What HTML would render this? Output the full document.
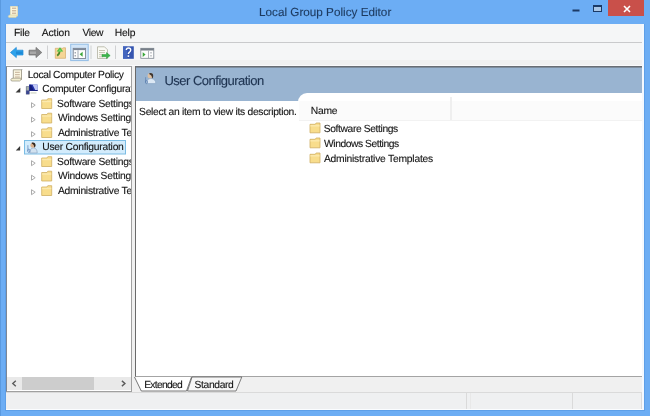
<!DOCTYPE html>
<html><head><meta charset="utf-8">
<style>
*{margin:0;padding:0;box-sizing:border-box}
html,body{width:650px;height:416px;overflow:hidden;background:#6cadf4}
#w{position:absolute;left:0;top:0;width:650px;height:416px;background:#6cadf4;font-family:"Liberation Sans",sans-serif;color:#151515;text-rendering:geometricPrecision;filter:blur(0.35px)}
.a{position:absolute}
.t{position:absolute;white-space:nowrap;font-size:10px;line-height:12px;-webkit-text-stroke:0.12px currentColor}
svg{position:absolute;overflow:visible}
.clip{position:absolute;overflow:hidden}


</style></head><body>
<div id="w">
<div class="a bgx" style="left:0;top:0;width:1px;height:416px;background:#5a9ae0"></div>
<div class="a bgx" style="left:6px;top:24px;width:638px;height:386px;background:#f0f0f0"></div>
<div class="a bgx" style="left:6px;top:24px;width:638px;height:18px;background:#f5f6f7"></div>
<div class="a bgx" style="left:6px;top:42px;width:638px;height:1px;background:#c9cacc"></div>
<div class="a bgx" style="left:6px;top:43px;width:638px;height:17px;background:#f5f6f7"></div>
<div class="a bgx" style="left:6px;top:65px;width:638px;height:1px;background:#f9f9fb"></div>

<!-- title icon -->
<svg style="left:6px;top:4px" width="16" height="16" viewBox="0 0 16 16">
<path d="M4.5 2.5 H11.5 V12 H4.5 Z" fill="#fbf6dc" stroke="#e8e0b8" stroke-width="0.8"/>
<path d="M2.2 12.2 Q3 10.8 4.5 11 H11.5 Q10.8 12.5 10 13.4 H2.8 Z" fill="#f2edc8" stroke="#d8d0a0" stroke-width="0.6"/>
<path d="M6 4.2 H10.2 M6 6.8 H10.2 M6 9.2 H10.2" stroke="#b89a80" stroke-width="0.9"/>
<path d="M11.8 2.5 L12.4 2" stroke="#5a6a80" stroke-width="0.6"/>
</svg>
<!-- window buttons -->
<div class="a bgx" style="left:608px;top:0;width:36px;height:16px;background:#c9504a"></div>
<svg style="left:560px;top:0" width="90" height="20">
<rect x="12.5" y="9.5" width="7" height="2" fill="#1b3a66"/>
<rect x="33.5" y="5.5" width="8" height="6" fill="#a9c6e6" stroke="#1b3a66" stroke-width="1"/>
<rect x="33" y="5" width="9" height="2" fill="#1b3a66"/>
<path d="M64 6 L70 12 M70 6 L64 12" stroke="#fff" stroke-width="1.6"/>
</svg>

<!-- toolbar -->
<svg style="left:6px;top:43px" width="160" height="21" viewBox="0 0 160 21">
 <path d="M4.5 9.5 L10.3 4.4 V7.2 H17 V12 H10.3 V14.6 Z" fill="#2ea3ec" stroke="#1a86d6" stroke-width="0.7"/>
 <path d="M10 8.5 H16.5 V11 H10 Z" fill="#1679c8" opacity="0.6"/>
 <path d="M35.8 9.5 L30 4.4 V7.2 H23 V12 H30 V14.6 Z" fill="#8a8a8a" stroke="#6e6e6e" stroke-width="0.7"/>
 <path d="M24 8.5 H30 V11 H24 Z" fill="#a8a8a8"/>
 <rect x="41" y="2.5" width="1" height="13.5" fill="#d0d1d3"/>
 <path d="M49.3 5.3 H56.5 L57.3 4.8 H59.5 V15.3 H49.3 Z" fill="#f5d596" stroke="#d2aa6a" stroke-width="0.7"/>
 <path d="M53.8 7.5 Q53.8 10.5 51.2 12.8" stroke="#4f8a2a" stroke-width="1.9" fill="none"/>
 <path d="M50.6 8.6 L54 4.2 L57.2 8.4 Z" fill="#4cc043"/>
 <path d="M52.2 8.4 L54 6 L55.8 8.4 Z" fill="#7ad86a"/>
 <rect x="64.7" y="1.2" width="17.5" height="16.4" fill="#d2e5f8" stroke="#93bde6" stroke-width="1"/>
 <rect x="67.2" y="5.3" width="12.4" height="10.2" fill="#fdfdfd" stroke="#6f7888" stroke-width="0.8"/>
 <rect x="67.2" y="5.3" width="12.4" height="1.8" fill="#7d8898"/>
 <path d="M69.2 9 V10.5 M69.2 12 V13.5" stroke="#6f7888" stroke-width="0.9"/>
 <rect x="71.6" y="7.2" width="0.8" height="8" fill="#8a93a0"/>
 <path d="M73.6 11.3 L76.6 8.8 V13.8 Z" fill="#3aa63a"/>
 <rect x="84.5" y="2.5" width="1" height="13.5" fill="#d0d1d3"/>
 <path d="M91.5 3.8 H98.5 L101.5 6.8 V15.5 H91.5 Z" fill="#fafaf4" stroke="#a7a796" stroke-width="0.7"/>
 <path d="M93 7.5 H99 M93 9.6 H99 M93 11.7 H97 M93 13.8 H97" stroke="#b9b89f" stroke-width="0.8"/>
 <path d="M96 11.5 H100.5 V9.6 L104.2 12.6 L100.5 15.6 V13.7 H96 Z" fill="#3cb54a" stroke="#2b9a38" stroke-width="0.5"/>
 <rect x="109" y="2.5" width="1" height="13.5" fill="#d0d1d3"/>
 <rect x="117" y="3.3" width="10.8" height="12.5" fill="#3555b0"/>
 <rect x="117" y="3.3" width="4" height="12.5" fill="#4a6cc4" opacity="0.7"/>
 <path d="M120.3 7 Q120.5 5 122.5 5 Q124.7 5 124.7 7 Q124.7 8.4 123.2 9.3 Q122.4 9.8 122.4 11" stroke="#fff" stroke-width="1.4" fill="none"/>
 <rect x="121.6" y="12.3" width="1.6" height="1.6" fill="#fff"/>
 <rect x="134.8" y="5.3" width="13" height="10" fill="#fdfdfd" stroke="#7d8590" stroke-width="0.8"/>
 <rect x="134.8" y="5.3" width="13" height="2.2" fill="#767e88"/>
 <path d="M136.7 9.3 L139.6 11.6 L136.7 14 Z" fill="#3aa63a"/>
 <rect x="142.2" y="7.6" width="0.8" height="7.6" fill="#9aa0a8"/>
 <path d="M145 9 V10.5 M145 12 V13.5" stroke="#8a9099" stroke-width="0.9"/>
</svg>

<!-- panes -->
<div class="a bgx" style="left:6px;top:66px;width:126px;height:326px;background:#fff;border:1px solid #a0a0a0;border-left-color:#7d8796"></div>
<div class="a bgx" style="left:135px;top:66px;width:507px;height:311px;background:#fff;border-left:1px solid #6a6a6a;border-top:1px solid #686d74;border-bottom:1px solid #a4a4a4"></div>
<div class="a bgx" style="left:136px;top:67px;width:506px;height:34px;background:linear-gradient(#7d8c9c 0,#7d8c9c 1px,#99b4d1 1px)"></div>
<div class="a bgx" style="left:298px;top:93px;width:344px;height:282px;background:#fff;border-top-left-radius:9px"></div>

<!-- tree icons -->
<svg style="left:0;top:0" width="131" height="200" viewBox="0 0 131 200">
 <path d="M13.3 69.8 H21.5 V79.5 H13.3 Z" fill="#fbf7e2" stroke="#948f7e" stroke-width="0.8"/>
 <path d="M10.8 79.8 Q11.2 78 13.3 78.2 H21.5 Q21 80.6 19.6 81 H11.5 Z" fill="#f3eed0" stroke="#948f7e" stroke-width="0.7"/>
 <path d="M15 72.3 H19.8 M15 74.7 H19.8 M15 77 H19.8" stroke="#bda78e" stroke-width="0.9"/>
 <path d="M21.6 69.8 L22.3 69" stroke="#566170" stroke-width="0.6"/>
 <path d="M20.3 87.8 V92.5 H15.6 Z" fill="#3a3a3a"/>
 <rect x="26.2" y="86.7" width="3" height="7.4" fill="#aab4ac" stroke="#5a6080" stroke-width="0.6"/>
 <rect x="26.2" y="90.5" width="3" height="3.6" fill="#3a4690"/>
 <rect x="29.3" y="84.7" width="8.4" height="6" fill="#c4cbf6" stroke="#8d98dc" stroke-width="0.6"/>
 <path d="M29.3 84.7 H32.6 L35.4 90.4 H29.3 Z" fill="#2230a8"/>
 <path d="M29.3 84.7 H31 L33.6 90.4 H29.3 Z" fill="#141c7c"/>
 <rect x="29.3" y="90" width="8.4" height="1" fill="#1d2580"/>
 <rect x="30.5" y="92" width="6" height="1.8" fill="#dfe3d8"/>
 <rect x="24.5" y="140.5" width="101" height="13.5" fill="#d3ecfc" stroke="#7cbde4" stroke-width="1"/>
 <path d="M20.1 146 V150.5 H15.8 Z" fill="#3a3a3a"/>
 <path d="M29.8 153 Q29.8 148.2 33.5 147.9 Q37.2 148.2 37.2 153 Z" fill="#d2e2f0" stroke="#8ca6c4" stroke-width="0.7"/>
 <circle cx="32.9" cy="145.2" r="2.5" fill="#d9b08c"/>
 <path d="M31.8 142.6 Q35.6 142 35.5 145.4 Q35.3 147.2 34.2 147.6 Q34.4 144.6 31.8 143.6 Z" fill="#2f2720"/>
 <path d="M27.9 145.2 V151" stroke="#5a80b6" stroke-width="0.7" fill="none"/>
 <ellipse cx="28.8" cy="150.8" rx="1.1" ry="1.7" fill="none" stroke="#5a80b6" stroke-width="0.7"/>
 <g transform="translate(31,102.2)"><path d="M0.5 0.5 L4.2 3 L0.5 5.5 Z" fill="#fff" stroke="#a2a2a2" stroke-width="0.9"/></g><g transform="translate(41.2,98.2)"><path d="M0.5 1.8 H5.8 L6.6 0.5 H10.5 V10.3 H0.5 Z" fill="#f8dd8c" stroke="#cfae62" stroke-width="0.8"/><path d="M0.9 2.6 H10.1 V4 H0.9 Z" fill="#fbe9ae"/></g>
 <g transform="translate(31,116.7)"><path d="M0.5 0.5 L4.2 3 L0.5 5.5 Z" fill="#fff" stroke="#a2a2a2" stroke-width="0.9"/></g><g transform="translate(41.2,112.7)"><path d="M0.5 1.8 H5.8 L6.6 0.5 H10.5 V10.3 H0.5 Z" fill="#f8dd8c" stroke="#cfae62" stroke-width="0.8"/><path d="M0.9 2.6 H10.1 V4 H0.9 Z" fill="#fbe9ae"/></g>
 <g transform="translate(31,131.2)"><path d="M0.5 0.5 L4.2 3 L0.5 5.5 Z" fill="#fff" stroke="#a2a2a2" stroke-width="0.9"/></g><g transform="translate(41.2,127.2)"><path d="M0.5 1.8 H5.8 L6.6 0.5 H10.5 V10.3 H0.5 Z" fill="#f8dd8c" stroke="#cfae62" stroke-width="0.8"/><path d="M0.9 2.6 H10.1 V4 H0.9 Z" fill="#fbe9ae"/></g>
 <g transform="translate(31,160.2)"><path d="M0.5 0.5 L4.2 3 L0.5 5.5 Z" fill="#fff" stroke="#a2a2a2" stroke-width="0.9"/></g><g transform="translate(41.2,156.2)"><path d="M0.5 1.8 H5.8 L6.6 0.5 H10.5 V10.3 H0.5 Z" fill="#f8dd8c" stroke="#cfae62" stroke-width="0.8"/><path d="M0.9 2.6 H10.1 V4 H0.9 Z" fill="#fbe9ae"/></g>
 <g transform="translate(31,174.7)"><path d="M0.5 0.5 L4.2 3 L0.5 5.5 Z" fill="#fff" stroke="#a2a2a2" stroke-width="0.9"/></g><g transform="translate(41.2,170.7)"><path d="M0.5 1.8 H5.8 L6.6 0.5 H10.5 V10.3 H0.5 Z" fill="#f8dd8c" stroke="#cfae62" stroke-width="0.8"/><path d="M0.9 2.6 H10.1 V4 H0.9 Z" fill="#fbe9ae"/></g>
 <g transform="translate(31,189.2)"><path d="M0.5 0.5 L4.2 3 L0.5 5.5 Z" fill="#fff" stroke="#a2a2a2" stroke-width="0.9"/></g><g transform="translate(41.2,185.2)"><path d="M0.5 1.8 H5.8 L6.6 0.5 H10.5 V10.3 H0.5 Z" fill="#f8dd8c" stroke="#cfae62" stroke-width="0.8"/><path d="M0.9 2.6 H10.1 V4 H0.9 Z" fill="#fbe9ae"/></g>
</svg>
<div class="clip" style="left:0;top:0;width:131px;height:376px">
<div class="t" style="left:27.68px;top:69.8px;font-size:10.3px;letter-spacing:-0.34px">Local Computer Policy</div>
<div class="t" style="left:42.28px;top:83.8px;font-size:10.3px;letter-spacing:-0.247px">Computer Configuration</div>
<div class="t" style="left:57.12px;top:98.8px;font-size:10.3px;letter-spacing:-0.247px">Software Settings</div>
<div class="t" style="left:57.92px;top:112.8px;font-size:10.3px;letter-spacing:-0.247px">Windows Settings</div>
<div class="t" style="left:57.92px;top:127.8px;font-size:10.3px;letter-spacing:-0.247px">Administrative Templates</div>
<div class="t" style="left:42.2px;top:141.8px;font-size:10.3px;letter-spacing:-0.247px">User Configuration</div>
<div class="t" style="left:57.12px;top:156.8px;font-size:10.3px;letter-spacing:-0.247px">Software Settings</div>
<div class="t" style="left:57.92px;top:170.8px;font-size:10.3px;letter-spacing:-0.247px">Windows Settings</div>
<div class="t" style="left:57.92px;top:185.8px;font-size:10.3px;letter-spacing:-0.247px">Administrative Templates</div>
</div>

<!-- tree scrollbar -->
<div class="a bgx" style="left:7px;top:377px;width:124px;height:13px;background:#e9e9e9"></div>
<div class="a bgx" style="left:22px;top:377px;width:72px;height:13px;background:#cdcdcd"></div>
<svg style="left:8px;top:377px" width="123" height="13">
 <path d="M7.8 3.8 L4.8 6.5 L7.8 9.2" stroke="#5a5a5a" stroke-width="1.4" fill="none"/>
 <path d="M113.9 3.9 L116.9 6.5 L113.9 9.1" stroke="#5a5a5a" stroke-width="1.4" fill="none"/>
</svg>

<!-- header icon -->
<svg style="left:142px;top:70px" width="18" height="16" viewBox="142 70 18 16">
 <path d="M146.2 83.6 Q146.2 78.8 151 78.5 Q155.8 78.8 155.8 83.6 Z" fill="#dce8f4" stroke="#8aa6c6" stroke-width="0.7"/>
 <circle cx="150.3" cy="75.8" r="2.7" fill="#dcc0a4"/>
 <path d="M149.4 73 Q153.4 72.4 153.2 76.2 Q153 78 152 78.6 Q152.2 75.2 149.4 74.2 Z" fill="#3a332e"/>
 <path d="M145.6 77.2 V82.4" stroke="#5a80b0" stroke-width="0.7" fill="none"/>
 <ellipse cx="146.5" cy="82" rx="1.1" ry="1.6" fill="none" stroke="#5a80b0" stroke-width="0.7"/>
</svg>
<div class="a bgx" style="left:299px;top:101px;width:343px;height:19px;background:#fbfbfb"></div>
<div class="a bgx" style="left:450px;top:97px;width:2px;height:23px;background:#efefef"></div>
<div class="a bgx" style="left:299px;top:120px;width:343px;height:1px;background:#f2f2f2"></div>
<svg style="left:308px;top:120px" width="16" height="48" viewBox="308 120 16 48">
 <g transform="translate(309.5,122.5)"><path d="M0.5 1.8 H5.8 L6.6 0.5 H10.5 V10.3 H0.5 Z" fill="#f8dd8c" stroke="#cfae62" stroke-width="0.8"/><path d="M0.9 2.6 H10.1 V4 H0.9 Z" fill="#fbe9ae"/></g>
 <g transform="translate(309.5,137.5)"><path d="M0.5 1.8 H5.8 L6.6 0.5 H10.5 V10.3 H0.5 Z" fill="#f8dd8c" stroke="#cfae62" stroke-width="0.8"/><path d="M0.9 2.6 H10.1 V4 H0.9 Z" fill="#fbe9ae"/></g>
 <g transform="translate(309.5,152.5)"><path d="M0.5 1.8 H5.8 L6.6 0.5 H10.5 V10.3 H0.5 Z" fill="#f8dd8c" stroke="#cfae62" stroke-width="0.8"/><path d="M0.9 2.6 H10.1 V4 H0.9 Z" fill="#fbe9ae"/></g>
</svg>

<!-- tabs -->
<svg style="left:132px;top:375px" width="120" height="17" viewBox="132 375 120 17">
 <path d="M192 377 L241.8 377 L236 391 L187.5 391 Z" fill="#f6f6f6" stroke="#5e5e5e" stroke-width="0.8"/>
 <path d="M134.5 377 L141.3 391 L186.5 391 L191.5 377" fill="#fff" stroke="#555" stroke-width="0.8"/>
</svg>
<!-- status bar -->
<div class="a bgx" style="left:6px;top:392px;width:638px;height:1px;background:#dadada"></div>
<div class="a bgx" style="left:6px;top:393px;width:638px;height:16px;background:#eff0f1"></div>
<div class="a bgx" style="left:6px;top:409px;width:638px;height:1px;background:#fbfdff"></div>
<div class="a bgx" style="left:466px;top:393px;width:1px;height:16px;background:#dadada"></div>
<div class="a bgx" style="left:470px;top:393px;width:1px;height:16px;background:#e8e8e8"></div>
<div class="a bgx" style="left:572px;top:393px;width:1px;height:16px;background:#dadada"></div>
<div class="a bgx" style="left:641px;top:393px;width:1px;height:16px;background:#dadada"></div>
<!-- frame lines -->
<div class="a bgx" style="left:642px;top:24px;width:2px;height:386px;background:#f4f9ff"></div>
<div class="a bgx" style="left:5px;top:24px;width:1px;height:387px;background:#5d9fe8"></div>
<div class="a bgx" style="left:5px;top:410px;width:640px;height:1px;background:#5d9fe8"></div>
<div class="a bgx" style="left:644px;top:24px;width:1px;height:387px;background:#5d9fe8"></div>
<div class="t" style="left:259.0px;top:6.5px;font-size:11.7px;letter-spacing:0.017px;color:#1d3a5f">Local Group Policy Editor</div>
<div class="t" style="left:14.0px;top:28.3px;font-size:10.3px;letter-spacing:-0.2px">File</div>
<div class="t" style="left:41.68px;top:28px;font-size:10.3px;letter-spacing:-0.056px">Action</div>
<div class="t" style="left:82.44px;top:28px;font-size:10.3px;letter-spacing:-0.36px">View</div>
<div class="t" style="left:114.72px;top:28px;font-size:10.3px;letter-spacing:-0.146px">Help</div>
<div class="t" style="left:164.44px;top:74.5px;font-size:13px;letter-spacing:-0.509px;color:#1e3350">User Configuration</div>
<div class="t" style="left:139.12px;top:107.2px;font-size:10.3px;letter-spacing:-0.29px">Select an item to view its description.</div>
<div class="t" style="left:310.72px;top:106.3px;font-size:10.3px;letter-spacing:-0.2px">Name</div>
<div class="t" style="left:323.76px;top:124.1px;font-size:10.3px;letter-spacing:-0.39px">Software Settings</div>
<div class="t" style="left:324.08px;top:139.4px;font-size:10.3px;letter-spacing:-0.451px">Windows Settings</div>
<div class="t" style="left:323.92px;top:154.2px;font-size:10.3px;letter-spacing:-0.214px">Administrative Templates</div>
<div class="t" style="left:144.2px;top:379.8px;font-size:10.3px;letter-spacing:-0.702px">Extended</div>
<div class="t" style="left:194.6px;top:379.8px;font-size:10.3px;letter-spacing:-0.371px">Standard</div>

</div>
</body></html>
